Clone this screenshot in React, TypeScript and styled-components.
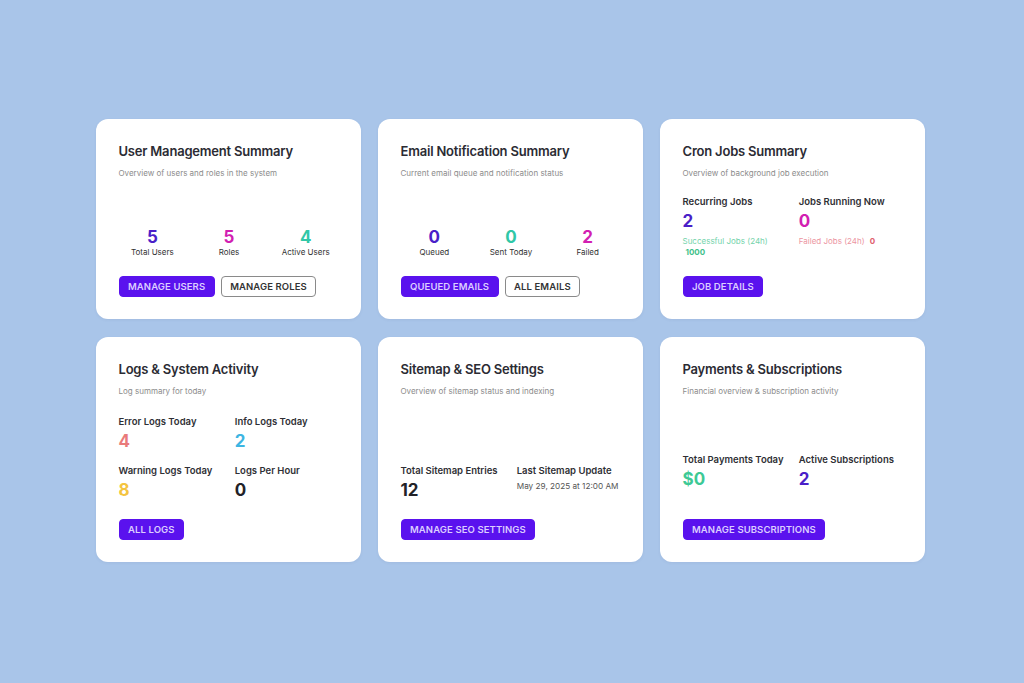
import { FC, ReactNode } from "react";
import styled, { createGlobalStyle } from "styled-components";

const GlobalStyle = createGlobalStyle`
  * {
    box-sizing: border-box;
  }
  html, body {
    margin: 0;
    padding: 0;
    background-color: #a9c5e9;
    font-family: Inter, "Noto Sans", "Liberation Sans", sans-serif;
    -webkit-font-smoothing: antialiased;
  }
`;

const Page = styled.main`
  min-height: 100vh;
  display: flex;
  align-items: center;
  justify-content: center;
`;

const Grid = styled.div`
  display: grid;
  grid-template-columns: repeat(3, 265px);
  grid-template-rows: 200px 225px;
  column-gap: 17px;
  row-gap: 18px;
  margin: 0 3px 2px 0;
`;

const Card = styled.section`
  display: flex;
  flex-direction: column;
  background-color: #fff;
  border-radius: 12px;
  padding: 24px 22px 22px 22.5px;
  box-shadow: 0 1px 3px rgba(60, 80, 120, 0.08);
`;

const CardHeader = styled.header`
  margin-bottom: 14px;
`;

const CardTitle = styled.h2`
  margin: 0;
  font-size: 13px;
  line-height: 16px;
  font-weight: 600;
  color: #2b2b33;
  letter-spacing: -0.2px;
`;

const CardSubtitle = styled.p`
  margin: 8.5px 0 0;
  font-size: 8px;
  line-height: 11px;
  color: #8c8c8c;
`;

const CardBody = styled.div<{ $extraBottom?: number }>`
  margin-top: auto;
  padding-bottom: ${(p) => p.$extraBottom ?? 0}px;
`;

const CenterStats = styled.div`
  display: grid;
  grid-template-columns: repeat(3, 1fr);
  margin: 0 -5px 0 -4.5px;
`;

const CenterStat = styled.div`
  display: flex;
  flex-direction: column;
  align-items: center;
`;

const BigNumber = styled.div<{ $color: string }>`
  font-size: 17px;
  line-height: 20px;
  font-weight: 700;
  color: ${(p) => p.$color};
`;

const SmallLabel = styled.div`
  font-size: 8px;
  line-height: 11px;
  color: #333;
`;

const StatGrid = styled.div`
  display: grid;
  grid-template-columns: 1fr 1fr;
  column-gap: 12px;
  row-gap: 12px;
`;

const Stat = styled.div`
  display: flex;
  flex-direction: column;
`;

const StatLabel = styled.div`
  font-size: 9.5px;
  line-height: 13px;
  font-weight: 600;
  color: #2f2f35;
  white-space: nowrap;
`;

const StatValue = styled.div<{ $color: string }>`
  margin-top: 2px;
  font-size: 17px;
  line-height: 22px;
  font-weight: 700;
  color: ${(p) => p.$color};
`;

const StatNote = styled.div`
  margin-top: 3px;
  font-size: 8.2px;
  line-height: 12px;
  color: #555;
  white-space: nowrap;
`;

const JobNote = styled.div<{ $color: string }>`
  margin-top: 4px;
  font-size: 8px;
  line-height: 11px;
  color: ${(p) => p.$color};
`;

const JobCount = styled.span<{ $color: string; $wrap?: boolean }>`
  display: ${(p) => (p.$wrap ? "block" : "inline")};
  margin-left: ${(p) => (p.$wrap ? "3px" : "5px")};
  font-weight: 700;
  color: ${(p) => p.$color};
`;

const Actions = styled.div`
  display: flex;
  gap: 6px;
  margin-top: 18px;
`;

const Button = styled.button<{ $outline?: boolean }>`
  height: 21px;
  padding: 0 8.5px;
  border-radius: 4px;
  font-family: inherit;
  font-size: 9.5px;
  font-weight: 600;
  letter-spacing: 0.1px;
  text-transform: uppercase;
  cursor: pointer;
  border: 1px solid ${(p) => (p.$outline ? "#8a8a8a" : "#5a12ee")};
  background-color: ${(p) => (p.$outline ? "#fff" : "#5a12ee")};
  color: ${(p) => (p.$outline ? "#333" : "#dccdff")};
`;

const colors = {
  violet: "#4a1fc8",
  magenta: "#d21fb2",
  teal: "#30c7a7",
  salmon: "#e97a7a",
  sky: "#3db5e2",
  yellow: "#f4c440",
  dark: "#222228",
  green: "#3dc995",
};

interface DashCardProps {
  title: string;
  subtitle: string;
  children: ReactNode;
  actions: { label: string; outline?: boolean }[];
  extraBottom?: number;
}

const DashCard: FC<DashCardProps> = ({
  title,
  subtitle,
  children,
  actions,
  extraBottom,
}) => (
  <Card>
    <CardHeader>
      <CardTitle>{title}</CardTitle>
      <CardSubtitle>{subtitle}</CardSubtitle>
    </CardHeader>
    <CardBody $extraBottom={extraBottom}>{children}</CardBody>
    <Actions>
      {actions.map((a) => (
        <Button key={a.label} $outline={a.outline}>
          {a.label}
        </Button>
      ))}
    </Actions>
  </Card>
);

const App: FC = () => {
  return (
    <>
      <GlobalStyle />
      <Page>
        <Grid>
          <DashCard
            title="User Management Summary"
            subtitle="Overview of users and roles in the system"
            actions={[
              { label: "Manage Users" },
              { label: "Manage Roles", outline: true },
            ]}
          >
            <CenterStats>
              <CenterStat>
                <BigNumber $color={colors.violet}>5</BigNumber>
                <SmallLabel>Total Users</SmallLabel>
              </CenterStat>
              <CenterStat>
                <BigNumber $color={colors.magenta}>5</BigNumber>
                <SmallLabel>Roles</SmallLabel>
              </CenterStat>
              <CenterStat>
                <BigNumber $color={colors.teal}>4</BigNumber>
                <SmallLabel>Active Users</SmallLabel>
              </CenterStat>
            </CenterStats>
          </DashCard>

          <DashCard
            title="Email Notification Summary"
            subtitle="Current email queue and notification status"
            actions={[
              { label: "Queued Emails" },
              { label: "All Emails", outline: true },
            ]}
          >
            <CenterStats>
              <CenterStat>
                <BigNumber $color={colors.violet}>0</BigNumber>
                <SmallLabel>Queued</SmallLabel>
              </CenterStat>
              <CenterStat>
                <BigNumber $color={colors.teal}>0</BigNumber>
                <SmallLabel>Sent Today</SmallLabel>
              </CenterStat>
              <CenterStat>
                <BigNumber $color={colors.magenta}>2</BigNumber>
                <SmallLabel>Failed</SmallLabel>
              </CenterStat>
            </CenterStats>
          </DashCard>

          <DashCard
            title="Cron Jobs Summary"
            subtitle="Overview of background job execution"
            actions={[{ label: "Job Details" }]}
          >
            <StatGrid>
              <Stat>
                <StatLabel>Recurring Jobs</StatLabel>
                <StatValue $color={colors.violet}>2</StatValue>
                <JobNote $color="#74d3ab">
                  Successful Jobs (24h)
                  <JobCount $color="#3fbf8a" $wrap>
                    1000
                  </JobCount>
                </JobNote>
              </Stat>
              <Stat>
                <StatLabel>Jobs Running Now</StatLabel>
                <StatValue $color={colors.magenta}>0</StatValue>
                <JobNote $color="#ec95a2">
                  Failed Jobs (24h)
                  <JobCount $color="#e0606e">0</JobCount>
                </JobNote>
              </Stat>
            </StatGrid>
          </DashCard>

          <DashCard
            title="Logs & System Activity"
            subtitle="Log summary for today"
            actions={[{ label: "All Logs" }]}
          >
            <StatGrid>
              <Stat>
                <StatLabel>Error Logs Today</StatLabel>
                <StatValue $color={colors.salmon}>4</StatValue>
              </Stat>
              <Stat>
                <StatLabel>Info Logs Today</StatLabel>
                <StatValue $color={colors.sky}>2</StatValue>
              </Stat>
              <Stat>
                <StatLabel>Warning Logs Today</StatLabel>
                <StatValue $color={colors.yellow}>8</StatValue>
              </Stat>
              <Stat>
                <StatLabel>Logs Per Hour</StatLabel>
                <StatValue $color={colors.dark}>0</StatValue>
              </Stat>
            </StatGrid>
          </DashCard>

          <DashCard
            title="Sitemap & SEO Settings"
            subtitle="Overview of sitemap status and indexing"
            actions={[{ label: "Manage SEO Settings" }]}
          >
            <StatGrid>
              <Stat>
                <StatLabel>Total Sitemap Entries</StatLabel>
                <StatValue $color={colors.dark}>12</StatValue>
              </Stat>
              <Stat>
                <StatLabel>Last Sitemap Update</StatLabel>
                <StatNote>May 29, 2025 at 12:00 AM</StatNote>
              </Stat>
            </StatGrid>
          </DashCard>

          <DashCard
            title="Payments & Subscriptions"
            subtitle="Financial overview & subscription activity"
            actions={[{ label: "Manage Subscriptions" }]}
            extraBottom={11}
          >
            <StatGrid>
              <Stat>
                <StatLabel>Total Payments Today</StatLabel>
                <StatValue $color={colors.green}>$0</StatValue>
              </Stat>
              <Stat>
                <StatLabel>Active Subscriptions</StatLabel>
                <StatValue $color={colors.violet}>2</StatValue>
              </Stat>
            </StatGrid>
          </DashCard>
        </Grid>
      </Page>
    </>
  );
};

export default App;
